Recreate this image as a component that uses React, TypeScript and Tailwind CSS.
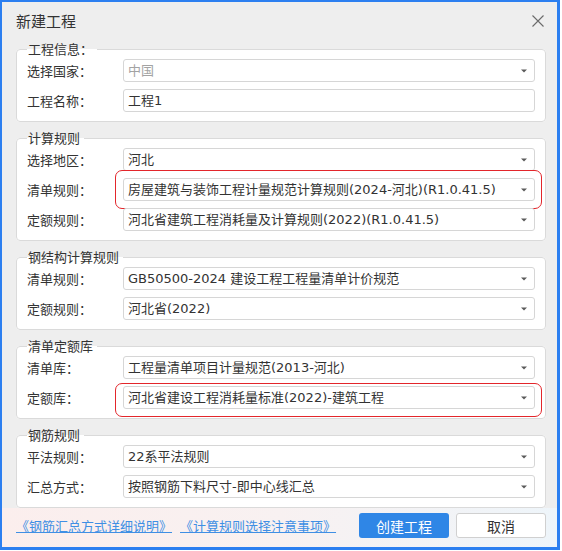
import React from "react";

const FONT = "font-['Noto_Sans_CJK_SC','Microsoft_YaHei',sans-serif]";
const VALUE_FONT = "font-['DejaVu_Sans','Noto_Sans_CJK_SC',sans-serif]";

function Caret() {
  return (
    <svg width="6" height="4" viewBox="0 0 6 4" className="shrink-0">
      <path d="M0 0.5h6L3 3.5z" fill="#5a5a5a" />
    </svg>
  );
}

function Field({
  value,
  muted,
  caret = true,
  highlight,
}: {
  value: string;
  muted?: boolean;
  caret?: boolean;
  highlight?: "full" | "low";
}) {
  return (
    <div className="relative flex-1">
      <div className="flex h-[23px] items-center justify-between rounded-[3px] border border-[#d6d6d6] bg-white pl-[4px] pr-[7px]">
        <span className={`whitespace-nowrap text-[13px] leading-[18px] ${VALUE_FONT} ${muted ? "text-[#a3a3a3]" : "text-[#333333]"}`}>
          {value}
        </span>
        {caret && <Caret />}
      </div>
      {highlight === "full" && (
        <div className="pointer-events-none absolute -bottom-[8px] -left-[8px] -right-[7px] -top-[8px] rounded-[7px] border-[1.5px] border-[#e3262b]" />
      )}
      {highlight === "low" && (
        <div className="pointer-events-none absolute -bottom-[8px] -left-[8px] -right-[7px] -top-[3px] rounded-[7px] border-[1.5px] border-[#e3262b]" />
      )}
    </div>
  );
}

function Row({
  label,
  value,
  muted,
  caret,
  highlight,
}: {
  label: string;
  value: string;
  muted?: boolean;
  caret?: boolean;
  highlight?: "full" | "low";
}) {
  return (
    <div className="flex items-center">
      <div className="w-[96px] shrink-0 whitespace-nowrap text-[13px] leading-[18px] text-[#333333]">{label}</div>
      <Field value={value} muted={muted} caret={caret} highlight={highlight} />
    </div>
  );
}

function Group({ title, children }: { title: string; children: React.ReactNode }) {
  return (
    <fieldset className="rounded-[4px] border border-[#dadada] bg-white px-[10px] pb-[9px]">
      <legend className="pl-[1px] pr-[4px] text-[13px] leading-[18px] text-[#333333]">{title}</legend>
      <div className="flex flex-col gap-[7px] pt-[1px]">{children}</div>
    </fieldset>
  );
}

export default function App() {
  return (
    <div className={`h-[551px] w-[562px] bg-white ${FONT}`}>
      <div className="flex h-[550px] w-[560px] flex-col border-b-[3px] border-l-2 border-r-[3px] border-t-2 border-[#2c7ff0] bg-[#eeeeee]">
        <div className="flex h-[38px] shrink-0 items-center justify-between pl-[14px] pr-[13px]">
          <span className="text-[15px] leading-[20px] text-[#333333]">新建工程</span>
          <svg width="12" height="12" viewBox="0 0 12 12">
            <path d="M0.5 0.5L11.5 11.5M11.5 0.5L0.5 11.5" stroke="#6a6a6a" strokeWidth="1.1" />
          </svg>
        </div>
        <div className="flex flex-col gap-[7px] pl-[14px] pr-[11px]">
          <Group title="工程信息：">
            <Row label="选择国家：" value="中国" muted />
            <Row label="工程名称：" value="工程1" caret={false} />
          </Group>
          <Group title="计算规则">
            <Row label="选择地区：" value="河北" />
            <Row label="清单规则：" value="房屋建筑与装饰工程计量规范计算规则(2024-河北)(R1.0.41.5)" highlight="full" />
            <Row label="定额规则：" value="河北省建筑工程消耗量及计算规则(2022)(R1.0.41.5)" />
          </Group>
          <Group title="钢结构计算规则">
            <Row label="清单规则：" value="GB50500-2024 建设工程工程量清单计价规范" />
            <Row label="定额规则：" value="河北省(2022)" />
          </Group>
          <Group title="清单定额库">
            <Row label="清单库：" value="工程量清单项目计量规范(2013-河北)" />
            <Row label="定额库：" value="河北省建设工程消耗量标准(2022)-建筑工程" highlight="low" />
          </Group>
          <Group title="钢筋规则">
            <Row label="平法规则：" value="22系平法规则" />
            <Row label="汇总方式：" value="按照钢筋下料尺寸-即中心线汇总" />
          </Group>
        </div>
        <div className="flex flex-1 items-start bg-gradient-to-r from-[#fbeeed] via-[#f8f1f1] to-[#eef5fa] pl-[14px] pr-[11px] pt-[5px]">
          <div className="flex h-[25px] w-full items-center">
            <span className="whitespace-nowrap text-[13px] leading-[18px] text-[#3f8fe4] underline">《钢筋汇总方式详细说明》</span>
            <span className="ml-[8px] whitespace-nowrap text-[13px] leading-[18px] text-[#3f8fe4] underline">《计算规则选择注意事项》</span>
            <div className="flex-1" />
            <div className="flex gap-[7px]">
              <button className="flex h-[25px] w-[90px] items-center justify-center rounded-[3px] bg-[#2f86e6] text-[14px] leading-[18px] text-white">
                创建工程
              </button>
              <button className="flex h-[25px] w-[90px] items-center justify-center rounded-[3px] border border-[#d0d0d0] bg-white text-[14px] leading-[18px] text-[#333333]">
                取消
              </button>
            </div>
          </div>
        </div>
      </div>
    </div>
  );
}
